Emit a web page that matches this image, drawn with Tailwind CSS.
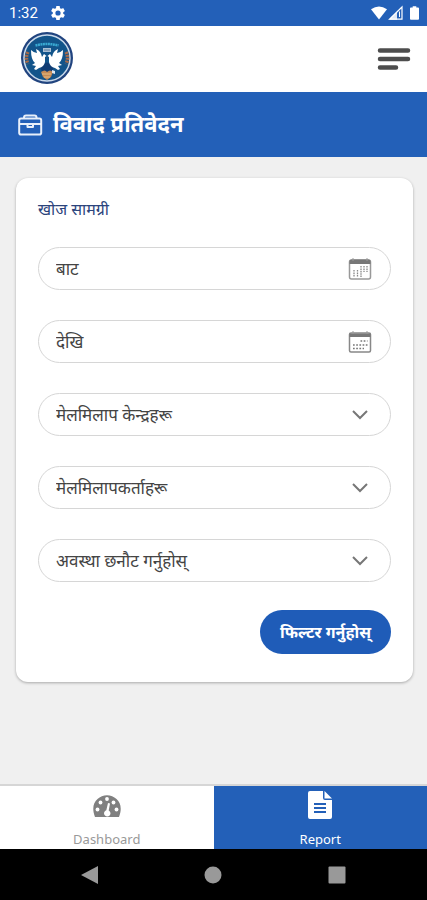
<!DOCTYPE html>
<html lang="ne">
<head>
<meta charset="utf-8">
<meta name="viewport" content="width=device-width, initial-scale=1">
<title>विवाद प्रतिवेदन</title>
<script src="https://cdn.jsdelivr.net/npm/@tailwindcss/browser@4"></script>
</head>
<body class="flex min-h-screen flex-col bg-[#f0f0f0] font-['Noto_Sans','Noto_Sans_Devanagari',sans-serif] text-[#444444]">

<!-- Status bar -->
<div class="flex h-[26px] items-center bg-[#2360b8] pr-2 pl-[9px] text-white">
  <span class="font-[Roboto,sans-serif] text-[15px] leading-4">1:32</span>
  <svg class="ml-3 size-4" viewBox="1 1 22 22" fill="currentColor" aria-hidden="true"><path fill-rule="evenodd" d="M19.14 12.94c.04-.3.06-.61.06-.94 0-.32-.02-.64-.07-.94l2.03-1.58a.49.49 0 0 0 .12-.61l-1.92-3.32a.49.49 0 0 0-.59-.22l-2.39.96c-.5-.38-1.03-.7-1.62-.94l-.36-2.54a.48.48 0 0 0-.48-.41h-3.84c-.24 0-.43.17-.47.41l-.36 2.54c-.59.24-1.13.57-1.62.94l-2.39-.96a.48.48 0 0 0-.59.22L2.74 8.87c-.12.21-.08.47.12.61l2.03 1.58c-.05.3-.09.63-.09.94s.02.64.07.94l-2.03 1.58a.49.49 0 0 0-.12.61l1.92 3.32c.12.22.37.29.59.22l2.39-.96c.5.38 1.03.7 1.62.94l.36 2.54c.05.24.24.41.48.41h3.84c.24 0 .44-.17.47-.41l.36-2.54c.59-.24 1.13-.56 1.62-.94l2.39.96c.22.08.47 0 .59-.22l1.92-3.32a.49.49 0 0 0-.12-.61zM12 15.6a3.6 3.6 0 1 1 0-7.2 3.6 3.6 0 0 1 0 7.2z"/></svg>
  <svg class="ml-auto h-4 w-4" viewBox="0 0 17 16" fill="currentColor" aria-hidden="true"><path d="M0 4Q8.500-2 17 4L8.500 15z"/></svg>
  <svg class="ml-px h-4 w-[15px]" viewBox="0 0 15 16" aria-hidden="true"><path d="M1.500 14.200 14 2v12.200z" fill="none" stroke="#fff" stroke-width="1.200"/><path d="M1 14.800 9 7v7.800z" fill="#fff" fill-opacity=".85"/><path d="M11.500 6.500v5.500" stroke="#fff" stroke-width="1"/></svg>
  <svg class="ml-[7px] h-[14px] w-[9px]" viewBox="0 0 10 15" fill="currentColor" aria-hidden="true"><path d="M3 0h4v1.500h2a1 1 0 0 1 1 1V14a1 1 0 0 1-1 1H1a1 1 0 0 1-1-1V2.500a1 1 0 0 1 1-1h2z"/></svg>
</div>

<!-- App header -->
<header class="flex h-[66px] items-center justify-between bg-white pr-4 pl-5">
  <svg class="size-[54px]" viewBox="0 1 54 54" role="img" aria-label="Logo">
    <circle cx="27" cy="27" r="26" fill="#21447f"/>
    <circle cx="27" cy="27" r="23" fill="#12548a" stroke="#c9d9ea" stroke-width="1.500"/>
    <path d="M15.500 14.500q11.500-3 23 0" fill="none" stroke="#39a9d2" stroke-width="2.500" stroke-dasharray="2 .5"/>
    <path d="M23 17h8v4h-8z" fill="#a9bfd4"/><path d="M24 19h6" stroke="#5b7f9f" stroke-width="1"/>
    <path d="M8 21q-3 6 0 12M46 21q3 6 0 12" fill="none" stroke="#a66a4b" stroke-width="3.500" stroke-dasharray="2 1"/>
    <path d="M20 35q7-7 14 0l-2 6H22z" fill="#103c73"/>
    <path id="dove" d="M11 19q3 3 6 3l-1-4q5 2 6 8l2-3 2.500 2-1.500 1v5q-1 5-6 6l-3 2-2-1 2-3-4-1 3-2q-4-3-4-13z" fill="#fff"/>
    <use href="#dove" transform="translate(54 0) scale(-1 1)"/>
    <path d="M21 41q4-3 6 0 3-3 6 0l-2 5-4 3-4-3z" fill="#c48a55"/>
    <path d="M22 43h9M24 46h6" stroke="#e4bd85" stroke-width="1"/>
    <path d="M32 39l3 1v3l-3-1z" fill="#dce7f1"/>
  </svg>
  <button type="button" aria-label="Menu" class="text-[#4d4d4d]">
    <svg class="h-6 w-[34px]" viewBox="0 0 34 24" fill="none" stroke="currentColor" stroke-width="4.500" stroke-linecap="round" aria-hidden="true"><path d="M3 3.500h28M3 12h28M3 20.500h16"/></svg>
  </button>
</header>

<div class="flex h-[65px] items-center gap-[10px] bg-[#2360b8] px-[18px] text-white">
  <svg class="h-6 w-[25px]" viewBox="0 0 25 24" fill="none" stroke="#e8effa" stroke-width="2" stroke-linejoin="round" aria-hidden="true"><rect x="1.200" y="5.500" width="22" height="16" rx="1.800"/><path d="M6 5.500V4.500a2 2 0 0 1 2-2h8.500a2 2 0 0 1 2 2v1M1 11h22.500M9.500 11.500v2.500h5.500v-2.500"/></svg>
  <h1 class="pb-1 text-[22px] leading-8 font-bold">विवाद प्रतिवेदन</h1>
</div>

<main class="flex-1 pt-[21px] pr-[14px] pl-4">
  <form class="flex flex-col rounded-xl bg-white px-[22px] pt-[19px] pb-7 shadow-[0_1px_3px_rgba(0,0,0,0.3)]">
    <h2 class="mb-[26px] text-base leading-6 text-[#2b447c]">खोज सामग्री</h2>

    <div class="flex flex-col gap-[30px]">
      <div class="flex h-[43px] items-center rounded-full border border-[#d6d6d6] pr-[18px] pl-[17px]">
        <input type="text" aria-label="बाट" placeholder="बाट" class="h-full min-w-0 flex-1 bg-transparent text-[17px] outline-none placeholder:text-[#444444]">
        <button type="button" aria-label="बाट मिति">
          <svg class="h-[22px] w-6" viewBox="0 0 24 22" aria-hidden="true"><rect x="1.500" y="2" width="21" height="19" rx="2" fill="#fff" stroke="#999" stroke-width="1.500"/><path d="M1.500 6V3.500a2 2 0 0 1 2-2h17a2 2 0 0 1 2 2V6z" fill="#777"/><path d="M5 0v3M19 0v3" stroke="#999"/><path d="M6 12v7M9.500 12v7M13 8v11M16 8v6M19 8v6" stroke="#888" stroke-width="1.300" stroke-dasharray="1.600 .8"/></svg>
        </button>
      </div>
      <div class="flex h-[43px] items-center rounded-full border border-[#d6d6d6] pr-[18px] pl-[17px]">
        <input type="text" aria-label="देखि" placeholder="देखि" class="h-full min-w-0 flex-1 bg-transparent text-[17px] outline-none placeholder:text-[#444444]">
        <button type="button" aria-label="देखि मिति">
          <svg class="h-[22px] w-6" viewBox="0 0 24 22" aria-hidden="true"><rect x="1.500" y="2" width="21" height="19" rx="1.500" fill="#fff" stroke="#888" stroke-width="1.500"/><path d="M1.500 6V2.500h21V6z" fill="#777"/><path d="M5 0v3M19 0v3" stroke="#999"/><path d="M12.500 10h7M5 14h14.500M5 17.500h11" stroke="#777" stroke-width="1.700" stroke-dasharray="1.700 1.500"/></svg>
        </button>
      </div>
      <div class="grid h-[43px] items-center rounded-full border border-[#d6d6d6]">
        <select aria-label="मेलमिलाप केन्द्रहरू" class="col-start-1 row-start-1 h-full w-full appearance-none rounded-full bg-transparent pr-12 pl-[17px] text-[17px] outline-none"><option>मेलमिलाप केन्द्रहरू</option></select>
        <svg class="pointer-events-none col-start-1 row-start-1 mr-[22px] h-[10px] w-4 justify-self-end" viewBox="0 0 16 10" fill="none" stroke="#777" stroke-width="2" aria-hidden="true"><path d="m1 1 7 7 7-7"/></svg>
      </div>
      <div class="grid h-[43px] items-center rounded-full border border-[#d6d6d6]">
        <select aria-label="मेलमिलापकर्ताहरू" class="col-start-1 row-start-1 h-full w-full appearance-none rounded-full bg-transparent pr-12 pl-[17px] text-[17px] outline-none"><option>मेलमिलापकर्ताहरू</option></select>
        <svg class="pointer-events-none col-start-1 row-start-1 mr-[22px] h-[10px] w-4 justify-self-end" viewBox="0 0 16 10" fill="none" stroke="#777" stroke-width="2" aria-hidden="true"><path d="m1 1 7 7 7-7"/></svg>
      </div>
      <div class="grid h-[43px] items-center rounded-full border border-[#d6d6d6]">
        <select aria-label="अवस्था छनौट गर्नुहोस्" class="col-start-1 row-start-1 h-full w-full appearance-none rounded-full bg-transparent pr-12 pl-[17px] text-[17px] outline-none"><option>अवस्था छनौट गर्नुहोस्</option></select>
        <svg class="pointer-events-none col-start-1 row-start-1 mr-[22px] h-[10px] w-4 justify-self-end" viewBox="0 0 16 10" fill="none" stroke="#777" stroke-width="2" aria-hidden="true"><path d="m1 1 7 7 7-7"/></svg>
      </div>
    </div>

    <button type="submit" class="mt-7 h-[44px] self-end rounded-full bg-[#1f5cb8] px-5 text-base font-bold text-white">फिल्टर गर्नुहोस्</button>
  </form>
</main>

<!-- Bottom tabs -->
<nav class="grid h-[65px] grid-cols-2 border-t-2 border-[#d6d6d6] bg-white text-center text-[13px] leading-5">
  <a href="#dashboard" class="flex flex-col items-center justify-between pt-2 text-[#999999]">
    <svg class="h-6 w-7" viewBox="0 0 28 24" aria-hidden="true"><path d="M2 23C-1 15 0 9 4.500 5A13.800 13.800 0 0 1 23.500 5C28 9 29 15 26 23z" fill="#808080"/><g fill="#fff"><circle cx="4.500" cy="15.500" r="1.900"/><circle cx="7.500" cy="8.500" r="1.900"/><circle cx="14" cy="5" r="1.900"/><circle cx="20.500" cy="8.500" r="1.900"/><circle cx="23.500" cy="15.500" r="1.900"/><path d="M15 9l2 .5-1.300 7a3.200 3.200 0 1 1-2.400-.2z"/></g></svg>
    <span>Dashboard</span>
  </a>
  <a href="#report" aria-current="page" class="flex flex-col items-center justify-between bg-[#2360b8] pt-1 text-white">
    <svg class="h-[30px] w-6" viewBox="0 0 24 30" aria-hidden="true"><path d="M2 1h13v7a2 2 0 0 0 2 2h7v17a2 2 0 0 1-2 2H2a2 2 0 0 1-2-2V3a2 2 0 0 1 2-2z" fill="#fff"/><path d="M16.500 1 24 8.500h-7.500z" fill="#fff"/><path d="M6 14h12M6 18h12M6 22h12" stroke="#2360b8" stroke-width="1.800"/></svg>
    <span>Report</span>
  </a>
</nav>

<!-- System navigation -->
<div class="flex h-[51px] items-center justify-around bg-black px-7 text-[#999999]">
  <button type="button" aria-label="Back"><svg class="size-[18px]" viewBox="0 0 18 18" fill="currentColor"><path d="M17 0v18L0 9z"/></svg></button>
  <button type="button" aria-label="Home"><svg class="size-[18px]" viewBox="0 0 18 18" fill="currentColor"><circle cx="9" cy="9" r="8.500"/></svg></button>
  <button type="button" aria-label="Recent"><svg class="size-[18px]" viewBox="0 0 18 18" fill="currentColor"><rect x=".5" y=".5" width="17" height="17" rx="1"/></svg></button>
</div>
</body>
</html>
